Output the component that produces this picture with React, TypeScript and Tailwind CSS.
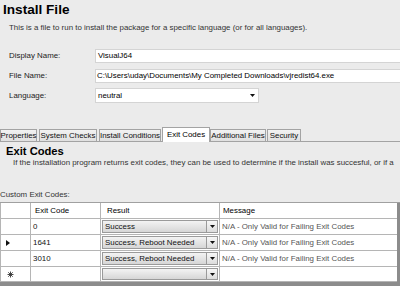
import React from 'react';

const tabs = [
  { label: 'Properties', cls: 'w-[37px]' },
  { label: 'System Checks', cls: 'ml-[2px] w-[58px]' },
  { label: 'Install Conditions', cls: 'ml-[2px] w-[62px]' },
  { label: 'Exit Codes', cls: 'ml-[1px] w-[48px]', active: true },
  { label: 'Additional Files', cls: 'w-[56px]' },
  { label: 'Security', cls: 'ml-[1px] w-[34px]' },
];

const rows = [
  { code: '0', result: 'Success', msg: 'N/A - Only Valid for Failing Exit Codes' },
  { code: '1641', result: 'Success, Reboot Needed', msg: 'N/A - Only Valid for Failing Exit Codes', current: true },
  { code: '3010', result: 'Success, Reboot Needed', msg: 'N/A - Only Valid for Failing Exit Codes' },
  { code: '', result: '', msg: '', isNew: true },
];

const DownArrow = () => (
  <svg width="5" height="3" viewBox="0 0 5 3">
    <path d="M0 0h5L2.5 3z" fill="#111" />
  </svg>
);

const ComboCell = ({ value }: { value: string }) => (
  <div className="h-full p-[1px]">
    <div className="h-full flex border border-[#9a9a9a] bg-gradient-to-b from-[#f3f3f3] to-[#d6d6d6]">
      <span className="flex-1 pl-[2px] leading-[12px] text-[#111] whitespace-nowrap overflow-hidden">{value}</span>
      <span className="w-[11px] border-l border-[#9a9a9a] flex items-center justify-center bg-gradient-to-b from-[#f7f7f7] to-[#dcdcdc]">
        <DownArrow />
      </span>
    </div>
  </div>
);

const FieldRow = ({ label, children, gap }: { label: string; children: React.ReactNode; gap: string }) => (
  <div className={`flex items-center ${gap}`}>
    <span className="w-[95px] pl-[9px] text-[#222]">{label}</span>
    {children}
  </div>
);

export default function App() {
  return (
    <div className="w-[400px] h-[286px] overflow-hidden bg-[#ebebeb] text-[#1a1a1a] flex flex-col text-[7.9px] font-['Liberation_Sans',Arial,sans-serif]">
      <div className="h-[22px] pl-[3px] pt-[1px] text-[13.6px] font-bold leading-[18px] text-black">Install File</div>
      <div className="h-[12px] pl-[9px] leading-[12px] text-[#333] whitespace-nowrap">
        This is a file to run to install the package for a specific language (or for all languages).
      </div>

      <FieldRow label="Display Name:" gap="mt-[15px]">
        <div className="flex-1 h-[14px] bg-white border border-[#d4d4d4] border-r-0 pl-[2px] leading-[12px] text-black">VisualJ64</div>
      </FieldRow>
      <FieldRow label="File Name:" gap="mt-[6px]">
        <div className="flex-1 h-[14px] bg-white border border-[#d4d4d4] border-r-0 pl-[1px] leading-[12px] text-black whitespace-nowrap">
          C:\Users\uday\Documents\My Completed Downloads\vjredist64.exe
        </div>
      </FieldRow>
      <FieldRow label="Language:" gap="mt-[5px]">
        <div className="w-[164px] h-[15px] bg-white border border-[#d4d4d4] pl-[2px] pr-[3px] flex items-center justify-between text-black">
          <span>neutral</span>
          <DownArrow />
        </div>
      </FieldRow>

      <div className="mt-[24px] h-[15px] flex items-end border-b border-[#a3a3a3]">
        {tabs.map((t) => (
          <div
            key={t.label}
            className={`${t.cls} flex items-center justify-center whitespace-nowrap border border-b-0 border-[#a3a3a3] ${
              t.active ? 'h-[15px] -mb-[1px] bg-white relative text-black' : 'h-[12px] bg-gradient-to-b from-[#f2f2f2] to-[#e0e0e0] text-[#111]'
            }`}
          >
            {t.label}
          </div>
        ))}
      </div>

      <div className="mt-[2px] pl-[6px] h-[14px] text-[11.2px] font-bold leading-[14px] text-black">Exit Codes</div>
      <div className="h-[10px] pl-[13px] leading-[10px] text-[#333] whitespace-nowrap overflow-hidden">
        If the installation program returns exit codes, they can be used to determine if the install was succesful, or if a
      </div>
      <div className="mt-[22px] h-[10px] leading-[10px] text-[#333]">Custom Exit Codes:</div>

      <div className="mt-[2px] flex-1 bg-[#8c8c8c] pr-[3px] border-t border-[#a0a0a0] overflow-hidden">
        <div className="grid grid-cols-[30px_70px_119px_1fr] grid-rows-[16px_16px_16px_16px_15px] bg-white border-l border-[#b5b5b5]">
          <div className="border-r border-b border-[#b5b5b5]" />
          <div className="border-r border-b border-[#b5b5b5] pl-[4px] leading-[15px] text-black">Exit Code</div>
          <div className="border-r border-b border-[#b5b5b5] pl-[6px] leading-[15px] text-black">Result</div>
          <div className="border-b border-[#b5b5b5] pl-[3px] leading-[15px] text-black">Message</div>
          {rows.map((r, i) => (
            <React.Fragment key={i}>
              <div className="border-r border-b border-[#b5b5b5] flex items-center pl-[5px]">
                {r.current && (
                  <svg width="4" height="6" viewBox="0 0 4 6">
                    <path d="M0 0l4 3-4 3z" fill="#111" />
                  </svg>
                )}
                {r.isNew && (
                  <svg width="7" height="7" viewBox="0 0 7 7" className="ml-[1px]">
                    <path d="M3.5 0.5v6M0.5 3.5h6M1.3 1.3l4.4 4.4M5.7 1.3l-4.4 4.4" stroke="#333" strokeWidth="0.9" />
                  </svg>
                )}
              </div>
              <div className="border-r border-b border-[#b5b5b5] pl-[2px] leading-[15px] text-[#111]">{r.code}</div>
              <div className="border-r border-b border-[#b5b5b5]">
                <ComboCell value={r.result} />
              </div>
              <div className="border-b border-[#b5b5b5] pl-[2px] leading-[15px] text-[#555] whitespace-nowrap overflow-hidden">{r.msg}</div>
            </React.Fragment>
          ))}
        </div>
      </div>
    </div>
  );
}
